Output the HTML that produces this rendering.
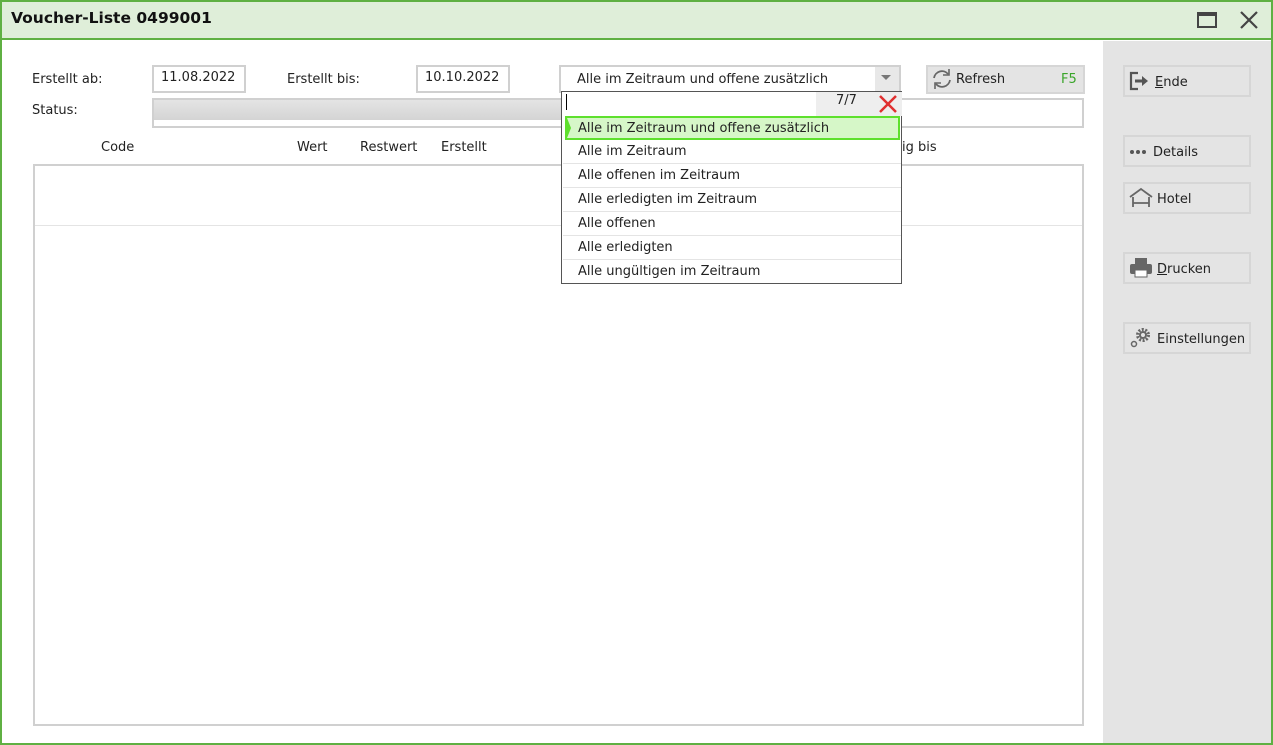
<!DOCTYPE html><html><head><meta charset="utf-8"><style>
*{box-sizing:border-box;margin:0;padding:0}
body{width:1273px;height:745px;position:relative;background:#fff;font-family:"DejaVu Sans","Liberation Sans",sans-serif;font-size:13px;color:#222;overflow:hidden}
.a{position:absolute}
.box{position:absolute;border:2px solid #d0d0d0;background:#fff}
.btn{position:absolute;left:1123px;width:128px;height:32px;border:2px solid #d6d6d6;background:#e4e4e4;font-size:13px;padding:6px 0 0 4px;display:flex;align-items:center;gap:4px;color:#222;height:32px}
.btn span{margin-top:2px}
.it{position:absolute;left:1px;width:338px;height:24px;border-bottom:1px solid #e4e4e4;padding:4px 0 0 15px;font-size:13px}
</style></head><body>
<div class="a" style="left:0;top:0;width:1273px;height:745px;border:2px solid #5fb043"></div>
<div class="a" style="left:2px;top:2px;width:1269px;height:38px;background:#dfeed9;border-bottom:2px solid #5fb043"></div>
<div class="a" style="left:11px;top:9px;font-weight:bold;font-size:15.5px;color:#111">Voucher-Liste 0499001</div>
<div class="a" style="left:1197px;top:12px;width:20px;height:16px;border:2px solid #444;border-top-width:4px"></div>
<svg class="a" style="left:1239px;top:10px" width="20" height="20"><path d="M2 2L18 18M18 2L2 18" stroke="#444" stroke-width="2.2"/></svg>
<div class="a" style="left:1103px;top:41px;width:168px;height:702px;background:#e4e4e4"></div>

<div class="a" style="left:32px;top:72px">Erstellt ab:</div>
<div class="box" style="left:152px;top:65px;width:94px;height:28px;padding:3px 0 0 7px">11.08.2022</div>
<div class="a" style="left:287px;top:72px">Erstellt bis:</div>
<div class="box" style="left:416px;top:65px;width:94px;height:28px;padding:3px 0 0 7px">10.10.2022</div>
<div class="a" style="left:32px;top:103px">Status:</div>
<div class="box" style="left:152px;top:98px;width:932px;height:30px"></div>
<div class="a" style="left:154px;top:100px;width:410px;height:20px;background:linear-gradient(#e4e4e4,#d4d4d4)"></div>
<div class="a" style="left:101px;top:140px">Code</div>
<div class="a" style="left:297px;top:140px">Wert</div>
<div class="a" style="left:360px;top:140px">Restwert</div>
<div class="a" style="left:441px;top:140px">Erstellt</div>
<div class="a" style="left:902px;top:140px">ig bis</div>
<div class="box" style="left:33px;top:164px;width:1051px;height:562px"></div>
<div class="a" style="left:35px;top:225px;width:1047px;height:1px;background:#e4e4e4"></div>

<div class="box" style="left:559px;top:65px;width:342px;height:28px;padding:5px 0 0 16px">Alle im Zeitraum und offene zusätzlich</div>
<div class="a" style="left:875px;top:67px;width:24px;height:24px;background:#e8e8e8"></div>
<svg class="a" style="left:881px;top:75px" width="10" height="6"><path d="M0 0H10L5 5Z" fill="#777"/></svg>
<div class="a" style="left:926px;top:65px;width:159px;height:29px;background:#e4e4e4;border:2px solid #d6d6d6"></div>
<svg class="a" style="left:930px;top:67px" width="24" height="24"><path d="M4 11A8 8 0 0 1 18 7M20 13A8 8 0 0 1 6 17" fill="none" stroke="#666" stroke-width="1.8"/><path d="M19 2V8H13" fill="none" stroke="#666" stroke-width="1.6"/><path d="M5 22V16H11" fill="none" stroke="#666" stroke-width="1.6"/></svg>
<div class="a" style="left:956px;top:72px">Refresh</div>
<div class="a" style="left:1061px;top:72px;color:#3aa52a">F5</div>

<div class="a" style="left:561px;top:91px;width:341px;height:193px;border:1px solid #555;background:#fff">
<div class="a" style="left:4px;top:2px;width:1px;height:16px;background:#000"></div>
<div class="a" style="left:254px;top:0;width:60px;height:24px;background:#eee;padding:1px 0 0 20px">7/7</div>
<div class="a" style="left:314px;top:0;width:26px;height:24px;background:#eee"></div>
<svg class="a" style="left:316px;top:2px" width="20" height="20"><path d="M2 2L18 18M18 2L2 18" stroke="#e03030" stroke-width="2.5"/></svg>
<div class="it" style="top:24px;height:24px;background:#d6f7c8;border:2px solid #5ee02d;left:3px;width:335px;padding:3px 0 0 11px">Alle im Zeitraum und offene zusätzlich</div>
<svg class="a" style="left:3px;top:26px" width="6" height="20"><path d="M0 0H2L6 10L2 20H0Z" fill="#5ee02d"/></svg>
<div class="it" style="top:48px">Alle im Zeitraum</div>
<div class="it" style="top:72px">Alle offenen im Zeitraum</div>
<div class="it" style="top:96px">Alle erledigten im Zeitraum</div>
<div class="it" style="top:120px">Alle offenen</div>
<div class="it" style="top:144px">Alle erledigten</div>
<div class="it" style="top:168px;border:none">Alle ungültigen im Zeitraum</div>
</div>

<div class="btn" style="top:65px;padding-top:0"><svg width="22" height="20"><path d="M9 2H2V18H9" fill="none" stroke="#555" stroke-width="2.2"/><path d="M6 10H14" stroke="#555" stroke-width="3"/><path d="M13 5L19 10L13 15Z" fill="#555"/></svg><span><u>E</u>nde</span></div>
<div class="btn" style="top:135px;padding-top:0"><svg width="20" height="18"><circle cx="3" cy="10" r="2" fill="#555"/><circle cx="9" cy="10" r="2" fill="#555"/><circle cx="15" cy="10" r="2" fill="#555"/></svg><span>Details</span></div>
<div class="btn" style="top:182px;padding-top:0"><svg width="24" height="22"><path d="M1 10L12 2L23 10" fill="none" stroke="#666" stroke-width="1.8"/><path d="M4 10V20M20 10V20M4 16H20" fill="none" stroke="#666" stroke-width="1.8"/></svg><span>Hotel</span></div>
<div class="btn" style="top:252px;padding-top:0"><svg width="24" height="22"><rect x="6" y="1" width="12" height="6" fill="#666"/><rect x="1" y="7" width="22" height="10" rx="2" fill="#666"/><rect x="6" y="13" width="12" height="7" fill="#fff" stroke="#666"/></svg><span><u>D</u>rucken</span></div>
<div class="btn" style="top:322px;padding-top:0"><svg width="24" height="22"><circle cx="14" cy="8" r="5.5" fill="none" stroke="#666" stroke-width="3" stroke-dasharray="2 1.5"/><circle cx="14" cy="8" r="3" fill="none" stroke="#666" stroke-width="2"/><circle cx="5" cy="17" r="2.5" fill="none" stroke="#666" stroke-width="1.5"/></svg><span>Einstellungen</span></div>
</body></html>
